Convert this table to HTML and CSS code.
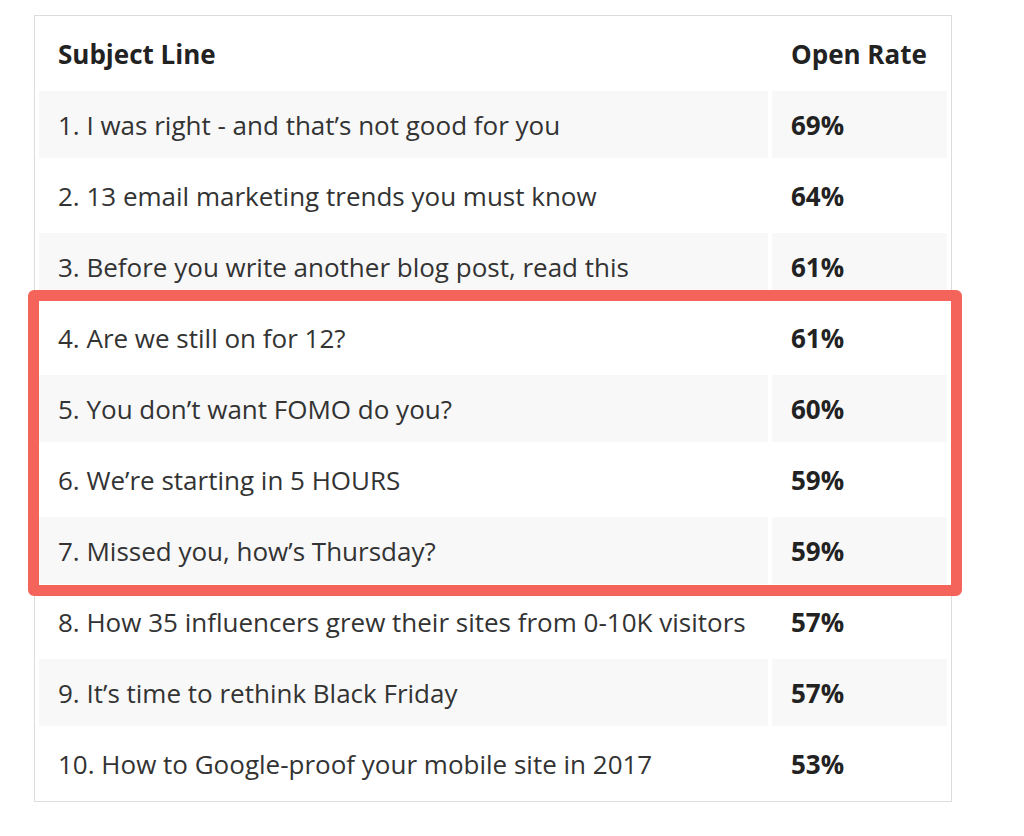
FILE: index.html
```html
<!DOCTYPE html>
<html>
<head>
<meta charset="utf-8">
<link rel="stylesheet" href="styles.css">
</head>
<body>
<div class="wrap">
  <table class="rates">
    <thead>
      <tr><th class="subj">Subject Line</th><th class="rate">Open Rate</th></tr>
    </thead>
    <tbody>
      <tr class="odd"><td class="subj">1. I was right - and that’s not good for you</td><td class="rate">69%</td></tr>
      <tr><td class="subj">2. 13 email marketing trends you must know</td><td class="rate">64%</td></tr>
      <tr class="odd"><td class="subj">3. Before you write another blog post, read this</td><td class="rate">61%</td></tr>
      <tr><td class="subj">4. Are we still on for 12?</td><td class="rate">61%</td></tr>
      <tr class="odd"><td class="subj">5. You don’t want FOMO do you?</td><td class="rate">60%</td></tr>
      <tr><td class="subj">6. We’re starting in 5 HOURS</td><td class="rate">59%</td></tr>
      <tr class="odd"><td class="subj">7. Missed you, how’s Thursday?</td><td class="rate">59%</td></tr>
      <tr><td class="subj">8. How 35 influencers grew their sites from 0-10K visitors</td><td class="rate">57%</td></tr>
      <tr class="odd"><td class="subj">9. It’s time to rethink Black Friday</td><td class="rate">57%</td></tr>
      <tr><td class="subj">10. How to Google-proof your mobile site in 2017</td><td class="rate">53%</td></tr>
    </tbody>
  </table>
  <div class="highlight"></div>
</div>
</body>
</html>
```

FILE: styles.css
```css
html, body {
  margin: 0;
  padding: 0;
  background: #ffffff;
}
body {
  font-family: "Open Sans", "Noto Sans", sans-serif;
  color: #333333;
}
.wrap {
  position: relative;
  margin: 15px 0 0 34px;
  width: 918px;
}
.rates {
  width: 918px;
  border: 1px solid #dcdcdc;
  border-collapse: separate;
  border-spacing: 4px;
  box-sizing: border-box;
}
.rates th,
.rates td {
  height: 67px;
  padding: 0 19px;
  text-align: left;
  vertical-align: middle;
  box-sizing: border-box;
  font-size: 26px;
  line-height: 1;
  white-space: nowrap;
}
.rates th {
  font-weight: 700;
  color: #222222;
}
.rates td.subj {
  width: 729px;
  font-weight: 400;
}
.rates td.rate {
  font-weight: 700;
  color: #222222;
}
.rates tr.odd td {
  background: #f8f8f8;
}
.highlight {
  position: absolute;
  left: -6px;
  top: 275px;
  width: 934px;
  height: 306px;
  border: 11px solid #f4645a;
  border-radius: 6px;
  box-sizing: border-box;
  pointer-events: none;
}
```
